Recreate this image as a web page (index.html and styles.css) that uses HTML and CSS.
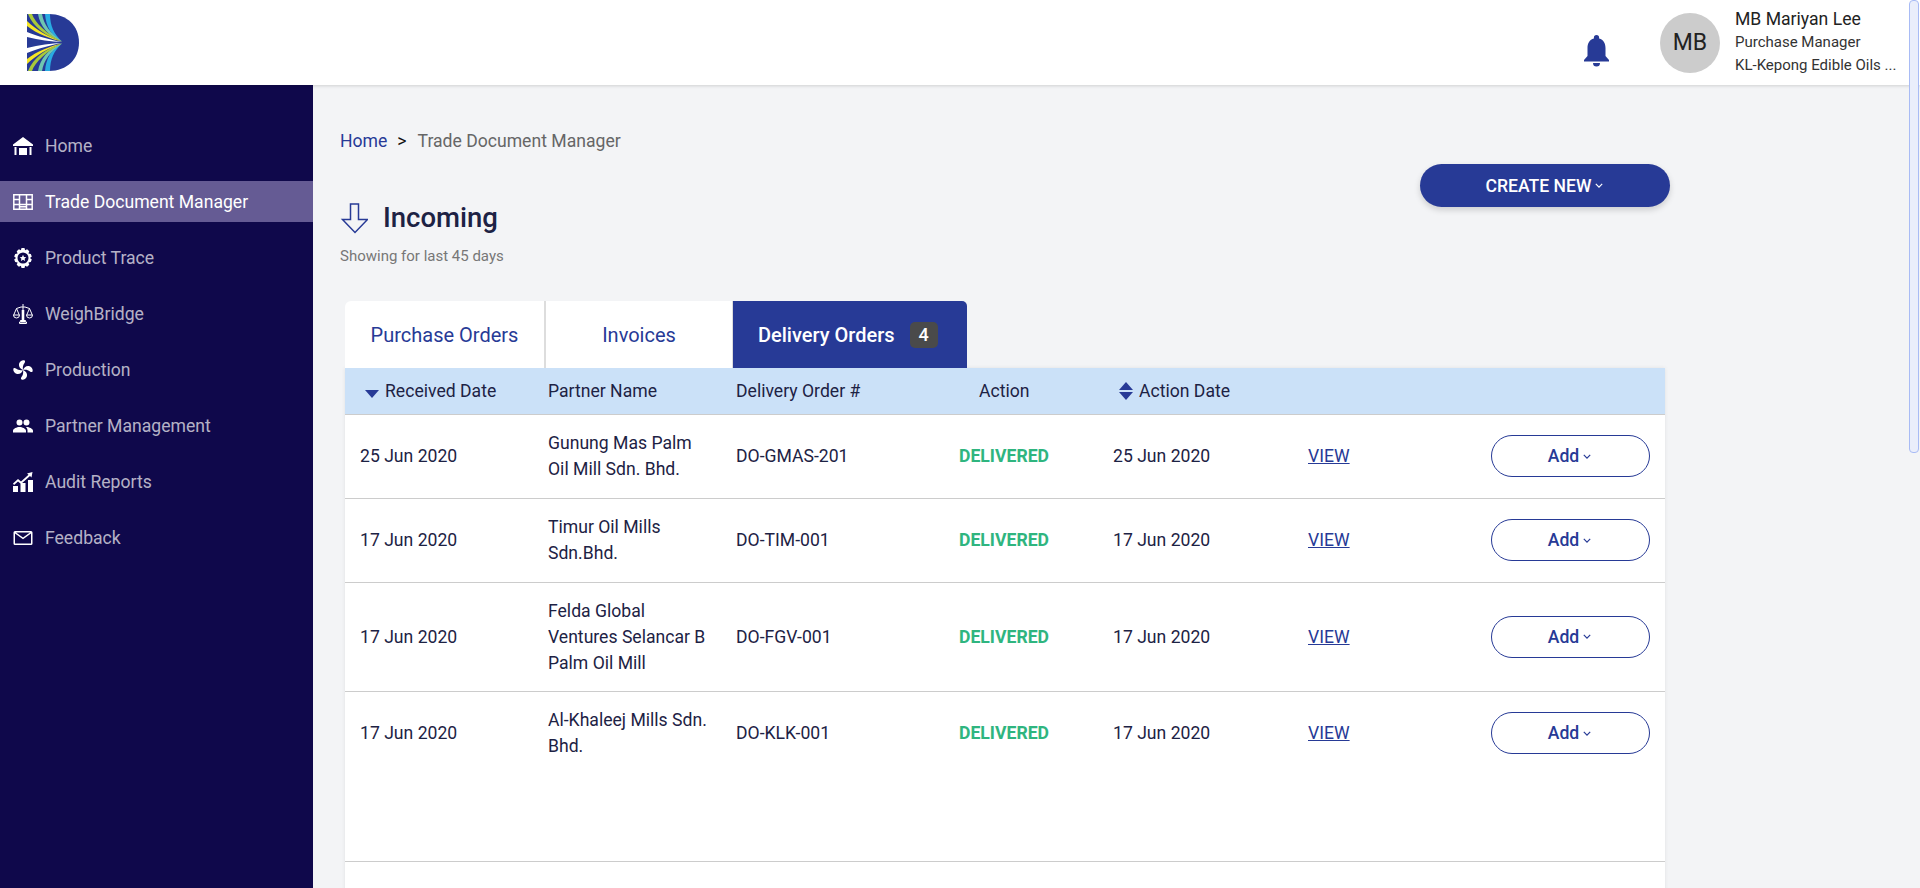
FILE: index.html
```html
<!DOCTYPE html>
<html lang="en">
<head>
    <meta charset="UTF-8">
    <meta name="viewport" content="width=device-width, initial-scale=1.0">
    <title>Trade Document Manager</title>
    <link rel="stylesheet" href="styles.css">
</head>
<body>
    <!-- Top bar -->
    <header class="topbar">
        <svg class="logo" viewBox="0 0 52 57" width="52" height="57">
            <path fill="#273a96" d="M0 0H22C40 0 52 12 52 28.500S40 57 22 57H0Z"/>
            <path fill="#29abe2" d="M18 0h5c0 12 4 20 12 27.500C24 22 19 12 18 0ZM18 57h5c0-12 4-20 12-27.500C24 35 19 45 18 57Z"/>
            <path fill="#6fc6b0" d="M11 0h4c2 11 8 19 20 27.500C21 22 13 12 11 0ZM11 57h4c2-11 8-19 20-27.500C21 35 13 45 11 57Z"/>
            <path fill="#a8c93a" d="M1 0h4C8 9 20 20 35 27.500C20 23 6 13 1 0ZM1 57h4C8 48 20 37 35 29.500C20 34 6 44 1 57Z"/>
            <path fill="#f5e625" d="M0 7V12C10 20 24 25 35 27.500C22 23 9 16 0 7ZM0 50V45C10 37 24 32 35 29.500C22 34 9 41 0 50Z"/>
            <path fill="#fff" d="M0 18V23C12 26 24 27.500 35 28C24 26 10 22 0 18ZM0 39V34C12 31 24 29.500 35 29C24 31 10 35 0 39Z"/>
        </svg>
        <div class="topbar-right">
            <svg class="bell" viewBox="0 0 25 32" width="25" height="32">
                <path fill="#273a96" d="M12.500 0a2.600 2.600 0 0 1 2.600 2.600v.9C19.500 4.700 21.500 8.500 21.500 13v8l3.500 4v1.500H0V25l3.500-4v-8c0-4.500 2-8.300 6.400-9.500v-.9A2.600 2.600 0 0 1 12.500 0ZM9 28h7a3.500 3.500 0 0 1-7 0Z"/>
            </svg>
            <div class="avatar">MB</div>
            <div class="user">
                <div class="user-name">MB Mariyan Lee</div>
                <div class="user-line">Purchase Manager</div>
                <div class="user-line">KL-Kepong Edible Oils ...</div>
            </div>
        </div>
    </header>

    <div class="layout">
        <!-- Side menu -->
        <nav class="sidebar">
            <a class="nav-item">
                <svg viewBox="0 0 20 20"><path d="M10 1 20 8.500V10H0V8.500ZM1.500 11h2v8h-2ZM16.500 11h2v8h-2ZM6 12h8v7H6Z"/></svg>
                Home
            </a>
            <a class="nav-item active">
                <svg viewBox="0 0 20 20"><path fill="none" stroke="#fff" stroke-width="1.500" d="M.8 2.800h18.400v14.400H.8ZM6.500 2.800v14.400M13.500 2.800v14.400M.8 7.500h5.700M.8 12.500h18.400M13.500 7.500h5.700M6.500 14.800h7"/></svg>
                Trade Document Manager
            </a>
            <a class="nav-item">
                <svg viewBox="0 0 20 20"><path fill-rule="evenodd" d="M8.500 0h3l.6 2.200 2-.9 2.200 2-.9 2.100L17.800 6l1 2.500L17 10l1.800 1.500-1 2.500-2.400.6.900 2.100-2.200 2-2-.9-.6 2.200h-3l-.6-2.200-2 .9-2.200-2 .9-2.100L2.200 14l-1-2.500L3 10 1.200 8.500l1-2.500 2.400-.6-.9-2.100 2.200-2 2 .9ZM10 4.500a5.500 5.500 0 1 0 0 11 5.500 5.500 0 0 0 0-11ZM10 6.800l1 2.100 2.300.3-1.700 1.500.5 2.300-2.100-1.200-2.100 1.200.5-2.300-1.700-1.500 2.300-.3Z"/></svg>
                Product Trace
            </a>
            <a class="nav-item">
                <svg viewBox="0 0 20 20"><path fill="none" stroke="#fff" stroke-width="1" d="M10 0v16M3.500 4.500 8 3h4l4.500 1.500M3.500 4.500.7 11M3.500 4.500 6.300 11M16.500 4.500 13.700 11M16.500 4.500 19.300 11M.5 11h6a3 3 0 0 1-6 0ZM13.500 11h6a3 3 0 0 1-6 0ZM6.500 18h7v1.500h-7Z"/><path d="M8.700 6h2.600v10h1.500v2H7.200v-2h1.500Z"/></svg>
                WeighBridge
            </a>
            <a class="nav-item">
                <svg viewBox="0 0 20 20">
                    <path id="blade" d="M10 10C7.500 9 5.500 7 6 4 6.500 1.500 9 0 11 .3 12.300.5 12.300 2 11.500 3 10 5 9.500 7 10 10Z"/>
                    <use href="#blade" transform="rotate(90 10 10)"/>
                    <use href="#blade" transform="rotate(180 10 10)"/>
                    <use href="#blade" transform="rotate(270 10 10)"/>
                </svg>
                Production
            </a>
            <a class="nav-item">
                <svg viewBox="0 0 20 20"><path d="M6.500 9.500a3 3 0 1 0 0-6 3 3 0 0 0 0 6ZM13.500 9.500a3 3 0 1 0 0-6 3 3 0 0 0 0 6ZM0 16.500v-1.800c0-2 3.800-3.700 6.500-3.700s6.500 1.700 6.500 3.700v1.800ZM14.500 16.500v-2c0-1.300-.6-2.400-1.600-3.400.2 0 .4-.1.600-.1 2.700 0 6.500 1.700 6.500 3.700v1.800Z"/></svg>
                Partner Management
            </a>
            <a class="nav-item">
                <svg viewBox="0 0 20 20"><path d="M0 14h5v6H0ZM7.500 11h5v9h-5ZM15 8h5v12h-5ZM0 11.500 5 7l3 2.500L15.500 2.800 14 1.500 19.500 0 18.500 5.500 17 4 8 12 5 9.500 1 13Z"/></svg>
                Audit Reports
            </a>
            <a class="nav-item">
                <svg viewBox="0 0 20 20"><path fill-rule="evenodd" d="M2 3h16a1.500 1.500 0 0 1 1.500 1.500v11A1.500 1.500 0 0 1 18 17H2a1.500 1.500 0 0 1-1.500-1.500v-11A1.500 1.500 0 0 1 2 3ZM3 4.500 10 9.500 17 4.500ZM2 5.500v10h16v-10L10 11.200Z"/></svg>
                Feedback
            </a>
        </nav>

        <!-- Main content -->
        <main class="content">
            <div class="breadcrumb">
                <a class="crumb-link">Home</a>
                <span class="crumb-sep">&gt;</span>
                <span class="crumb-current">Trade Document Manager</span>
            </div>

            <div class="title-row">
                <div>
                    <h1 class="page-title">
                        <svg viewBox="-1 0 28 31" width="28" height="31"><path fill="none" stroke="#273a96" stroke-width="1.500" d="M9.500 1h8v15.500h9L14 29.500 1.500 16.500h8Z"/></svg>
                        Incoming
                    </h1>
                    <p class="page-note">Showing for last 45 days</p>
                </div>
                <button class="btn-create">CREATE NEW<svg class="chev" viewBox="0 0 10 6"><path d="M1 1l4 4 4-4"/></svg></button>
            </div>

            <div class="tabs">
                <div class="tab tab-orders">Purchase Orders</div>
                <div class="tab tab-invoices">Invoices</div>
                <div class="tab tab-active">Delivery Orders <span class="tab-count">4</span></div>
            </div>

            <div class="table">
                <div class="row row-head">
                    <div class="sort"><span class="caret-down"></span>Received Date</div>
                    <div>Partner Name</div>
                    <div>Delivery Order #</div>
                    <div class="head-action">Action</div>
                    <div class="sort sort-both"><span class="carets"><span class="caret-up"></span><span class="caret-down"></span></span>Action Date</div>
                    <div></div>
                    <div></div>
                </div>

                <div class="row">
                    <div>25 Jun 2020</div>
                    <div class="partner">Gunung Mas Palm Oil Mill Sdn. Bhd.</div>
                    <div>DO-GMAS-201</div>
                    <div class="status">DELIVERED</div>
                    <div>25 Jun 2020</div>
                    <div><a class="view">VIEW</a></div>
                    <div><button class="btn-add">Add<svg class="chev" viewBox="0 0 10 6"><path d="M1 1l4 4 4-4"/></svg></button></div>
                </div>
                <div class="row">
                    <div>17 Jun 2020</div>
                    <div class="partner">Timur Oil Mills Sdn.Bhd.</div>
                    <div>DO-TIM-001</div>
                    <div class="status">DELIVERED</div>
                    <div>17 Jun 2020</div>
                    <div><a class="view">VIEW</a></div>
                    <div><button class="btn-add">Add<svg class="chev" viewBox="0 0 10 6"><path d="M1 1l4 4 4-4"/></svg></button></div>
                </div>
                <div class="row row-tall">
                    <div>17 Jun 2020</div>
                    <div class="partner">Felda Global Ventures Selancar B Palm Oil Mill</div>
                    <div>DO-FGV-001</div>
                    <div class="status">DELIVERED</div>
                    <div>17 Jun 2020</div>
                    <div><a class="view">VIEW</a></div>
                    <div><button class="btn-add">Add<svg class="chev" viewBox="0 0 10 6"><path d="M1 1l4 4 4-4"/></svg></button></div>
                </div>
                <div class="row row-last">
                    <div>17 Jun 2020</div>
                    <div class="partner">Al-Khaleej Mills Sdn. Bhd.</div>
                    <div>DO-KLK-001</div>
                    <div class="status">DELIVERED</div>
                    <div>17 Jun 2020</div>
                    <div><a class="view">VIEW</a></div>
                    <div><button class="btn-add">Add<svg class="chev" viewBox="0 0 10 6"><path d="M1 1l4 4 4-4"/></svg></button></div>
                </div>
                <div class="table-end"></div>
            </div>
        </main>
    </div>

    <!-- Page scrollbar thumb -->
    <div class="scroll-thumb"></div>
</body>
</html>
```

FILE: styles.css
```css
* {
    box-sizing: border-box;
}

html, body {
    height: 100%;
}

body {
    margin: 0;
    font-family: Roboto, "Liberation Sans", sans-serif;
    font-size: 17.6px;
    color: #1d2244;
    background-color: #f3f4f6;
    overflow: hidden;
}

/* Top bar */
.topbar {
    height: 85px;
    background-color: #ffffff;
    box-shadow: 0 1px 3px rgba(0, 0, 0, 0.15);
    display: flex;
    justify-content: space-between;
    align-items: center;
    padding: 0 16px 0 27px;
    position: relative;
}

.logo {
    margin-top: -1px;
}

.topbar-right {
    display: flex;
    align-items: center;
    width: 320px;
}

.bell {
    margin: 17px 51px 0 0;
}

.avatar {
    width: 60px;
    height: 60px;
    border-radius: 50%;
    background-color: #cccccc;
    color: #222222;
    font-size: 23px;
    display: flex;
    align-items: center;
    justify-content: center;
    margin-right: 15px;
}

.user-name {
    font-size: 17.6px;
    line-height: 20px;
    margin-bottom: 2px;
    color: #222222;
}

.user-line {
    font-size: 15px;
    line-height: 23px;
    color: #333333;
}

/* Side menu */
.layout {
    display: flex;
    height: calc(100% - 85px);
}

.sidebar {
    width: 313px;
    flex-shrink: 0;
    background-color: #0f084b;
    padding-top: 40px;
}

.nav-item {
    height: 41px;
    margin-bottom: 15px;
    padding-left: 13px;
    display: flex;
    align-items: center;
    gap: 12px;
    font-size: 17.6px;
    color: rgba(255, 255, 255, 0.7);
}

.nav-item svg {
    width: 20px;
    height: 20px;
    fill: #ffffff;
}

.nav-item.active {
    background-color: #655b94;
    color: #ffffff;
}

/* Main content */
.content {
    flex: 1;
    padding: 45px 250px 0 27px;
    min-width: 0;
}

.breadcrumb {
    display: flex;
    gap: 10px;
    font-size: 17.6px;
    line-height: 22px;
}

.crumb-link {
    color: #273a96;
}

.crumb-sep {
    color: #111111;
    margin-right: 1px;
}

.crumb-current {
    color: #666666;
}

.title-row {
    display: flex;
    justify-content: space-between;
    align-items: flex-start;
    margin-top: 12px;
}

.page-title {
    margin: 37px 0 0;
    display: flex;
    align-items: center;
    gap: 15px;
    font-size: 27.5px;
    font-weight: 500;
    line-height: 34px;
    color: #1d2244;
}

.page-note {
    margin: 12px 0 0;
    font-size: 15px;
    line-height: 18px;
    color: #777777;
}

.btn-create {
    width: 250px;
    height: 43px;
    border: none;
    border-radius: 22px;
    background-color: #273a96;
    color: #ffffff;
    font-family: inherit;
    font-size: 17.6px;
    font-weight: 500;
    box-shadow: 0 3px 6px rgba(0, 0, 0, 0.16);
    display: flex;
    align-items: center;
    justify-content: center;
    gap: 3px;
    padding: 0 8px 0 6px;
}

.chev {
    width: 8px;
    height: 5px;
    fill: none;
    stroke: currentColor;
    stroke-width: 1.500;
}

/* Tabs */
.tabs {
    display: flex;
    margin: 36px 0 0 5px;
    height: 67px;
    font-size: 20px;
}

.tab {
    display: flex;
    align-items: center;
    justify-content: center;
    background-color: #ffffff;
    color: #273a96;
}

.tab-orders {
    width: 201px;
    border-top-left-radius: 6px;
    border-right: 2px solid #dddddd;
}

.tab-invoices {
    width: 187px;
    border-right: 1px solid #dddddd;
}

.tab-active {
    width: 234px;
    padding-left: 25px;
    justify-content: flex-start;
    background-color: #273a96;
    color: #ffffff;
    font-weight: 500;
    gap: 15px;
    border-top-right-radius: 5px;
}

.tab-count {
    width: 28px;
    height: 26px;
    border-radius: 5px;
    background-color: #4a4a4a;
    display: flex;
    align-items: center;
    justify-content: center;
    font-size: 18px;
}

/* Table */
.table {
    margin: 0 5px;
    background-color: #ffffff;
    height: 600px;
    box-shadow: 0 0 4px rgba(0, 0, 0, 0.08);
}

.row {
    display: grid;
    grid-template-columns: 188px 188px 223px 154px 195px 183px 159px;
    padding: 0 15px 1px 15px;
    height: 84px;
    align-items: center;
    border-bottom: 1px solid #cccccc;
    line-height: 26px;
    color: #1d2244;
}

.row-head {
    height: 47px;
    padding-bottom: 0;
    background-color: #cbe1f8;
}

.row-tall {
    height: 109px;
}

.row-last {
    padding-bottom: 2px;
    border-bottom: none;
}

.table-end {
    height: 86px;
    border-bottom: 1px solid #cccccc;
}

.partner {
    padding-right: 28px;
}

.sort {
    display: flex;
    align-items: center;
    gap: 6px;
    padding-left: 5px;
}

.sort > .caret-down {
    margin-top: 6px;
}

.sort-both {
    padding-left: 6px;
}

.head-action {
    padding-left: 20px;
}

.carets {
    display: flex;
    flex-direction: column;
    gap: 2px;
}

.caret-up {
    width: 0;
    height: 0;
    border-left: 7px solid transparent;
    border-right: 7px solid transparent;
    border-bottom: 8px solid #273a96;
}

.caret-down {
    width: 0;
    height: 0;
    border-left: 7px solid transparent;
    border-right: 7px solid transparent;
    border-top: 8px solid #273a96;
}

.status {
    font-weight: 700;
    color: #2fb57f;
}

.view {
    color: #273a96;
    text-decoration: underline;
}

.btn-add {
    width: 159px;
    height: 42px;
    border: 1px solid #273a96;
    border-radius: 21px;
    background-color: #ffffff;
    color: #273a96;
    font-family: inherit;
    font-size: 17.6px;
    font-weight: 500;
    display: flex;
    align-items: center;
    justify-content: center;
    gap: 4px;
    padding: 0 2px 0 0;
}

.scroll-thumb {
    position: absolute;
    top: 0;
    right: 1px;
    width: 10px;
    height: 453px;
    background-color: #eaeefb;
    border: 1px solid #a8bbf5;
    border-radius: 4px;
}
```
